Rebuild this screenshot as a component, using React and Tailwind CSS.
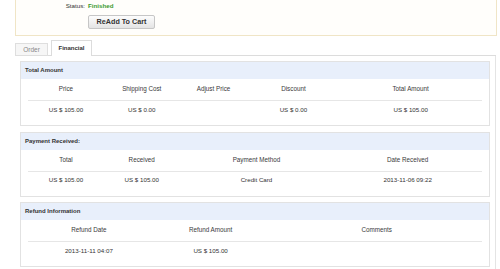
const totalCols = [
  { label: "Price", value: "US $ 105.00", w: "w-[76px]" },
  { label: "Shipping Cost", value: "US $ 0.00", w: "w-[76px]" },
  { label: "Adjust Price", value: "", w: "w-[68px]" },
  { label: "Discount", value: "US $ 0.00", w: "w-[92px]" },
  { label: "Total Amount", value: "US $ 105.00", w: "w-[143px]" },
];

const paymentCols = [
  { label: "Total", value: "US $ 105.00", w: "w-[76px]" },
  { label: "Received", value: "US $ 105.00", w: "w-[76px]" },
  { label: "Payment Method", value: "Credit Card", w: "w-[154px]" },
  { label: "Date Received", value: "2013-11-06 09:22", w: "w-[149px]" },
];

const refundCols = [
  { label: "Refund Date", value: "2013-11-11 04:07", w: "w-[122px]" },
  { label: "Refund Amount", value: "US $ 105.00", w: "w-[122px]" },
  { label: "Comments", value: "", w: "w-[211px]" },
];

function Panel({ title, cols }) {
  return (
    <div className="border border-[#e2e2e2] bg-white">
      <div className="h-[17px] bg-[#e8effb] px-[4px] flex items-center text-[6px] font-bold text-[#333]">
        {title}
      </div>
      <div className="mx-[7px] pb-[7px]">
        <div className="flex h-[22px] border-b border-[#e6e6e6] pb-[1px] items-center text-[6.3px] text-[#3a3a3a]">
          {cols.map((c) => (
            <div key={c.label} className={`${c.w} text-center`}>
              {c.label}
            </div>
          ))}
        </div>
        <div className="flex h-[17px] items-center text-[6.2px] text-[#333]">
          {cols.map((c) => (
            <div key={c.label} className={`${c.w} text-center`}>
              {c.value}
            </div>
          ))}
        </div>
      </div>
    </div>
  );
}

export default function App() {
  return (
    <div className="w-[500px] h-[269px] overflow-hidden bg-white font-['Liberation_Sans',Arial,sans-serif]">
      {/* order summary box (cut at top) */}
      <div className="ml-[15px] mr-[3px] h-[36px] border-x border-b border-[#f0e5c6] bg-[#fffefb]">
        <div className="flex items-center h-[10px] pt-[1px] text-[6.2px]">
          <span className="w-[69px] text-right text-[#333]">Status:</span>
          <span className="ml-[3px] font-bold text-[#3a9a2e]">Finished</span>
        </div>
        <button className="ml-[72px] mt-[5px] w-[67px] h-[14px] rounded-[2px] border border-[#c6c6c6] bg-gradient-to-b from-[#fdfdfd] to-[#e4e4e4] text-[7.2px] font-bold text-[#333] flex items-center justify-center">
          ReAdd To Cart
        </button>
      </div>

      {/* tabs */}
      <div className="ml-[15px] mr-[4px] mt-[4px] h-[16px] flex items-end gap-[3px] border-b border-[#dcdcdc]">
        <div className="w-[33px] h-[13px] mb-[-1px] border border-[#dedede] bg-[#f6f6f6] text-[6.5px] text-[#888] flex items-center justify-center">
          Order
        </div>
        <div className="w-[41px] h-[16px] mb-[-1px] border border-b-0 border-[#dcdcdc] bg-white text-[6px] font-bold text-[#333] flex items-center justify-center">
          Financial
        </div>
      </div>

      {/* tab content */}
      <div className="ml-[15px] mr-[4px] border-r border-[#e4e4e4] pl-[5px] pr-[5px] pt-[5px] flex flex-col gap-[5.5px] h-[220px]">
        <Panel title="Total Amount" cols={totalCols} />
        <Panel title="Payment Received:" cols={paymentCols} />
        <Panel title="Refund Information" cols={refundCols} />
      </div>
    </div>
  );
}
